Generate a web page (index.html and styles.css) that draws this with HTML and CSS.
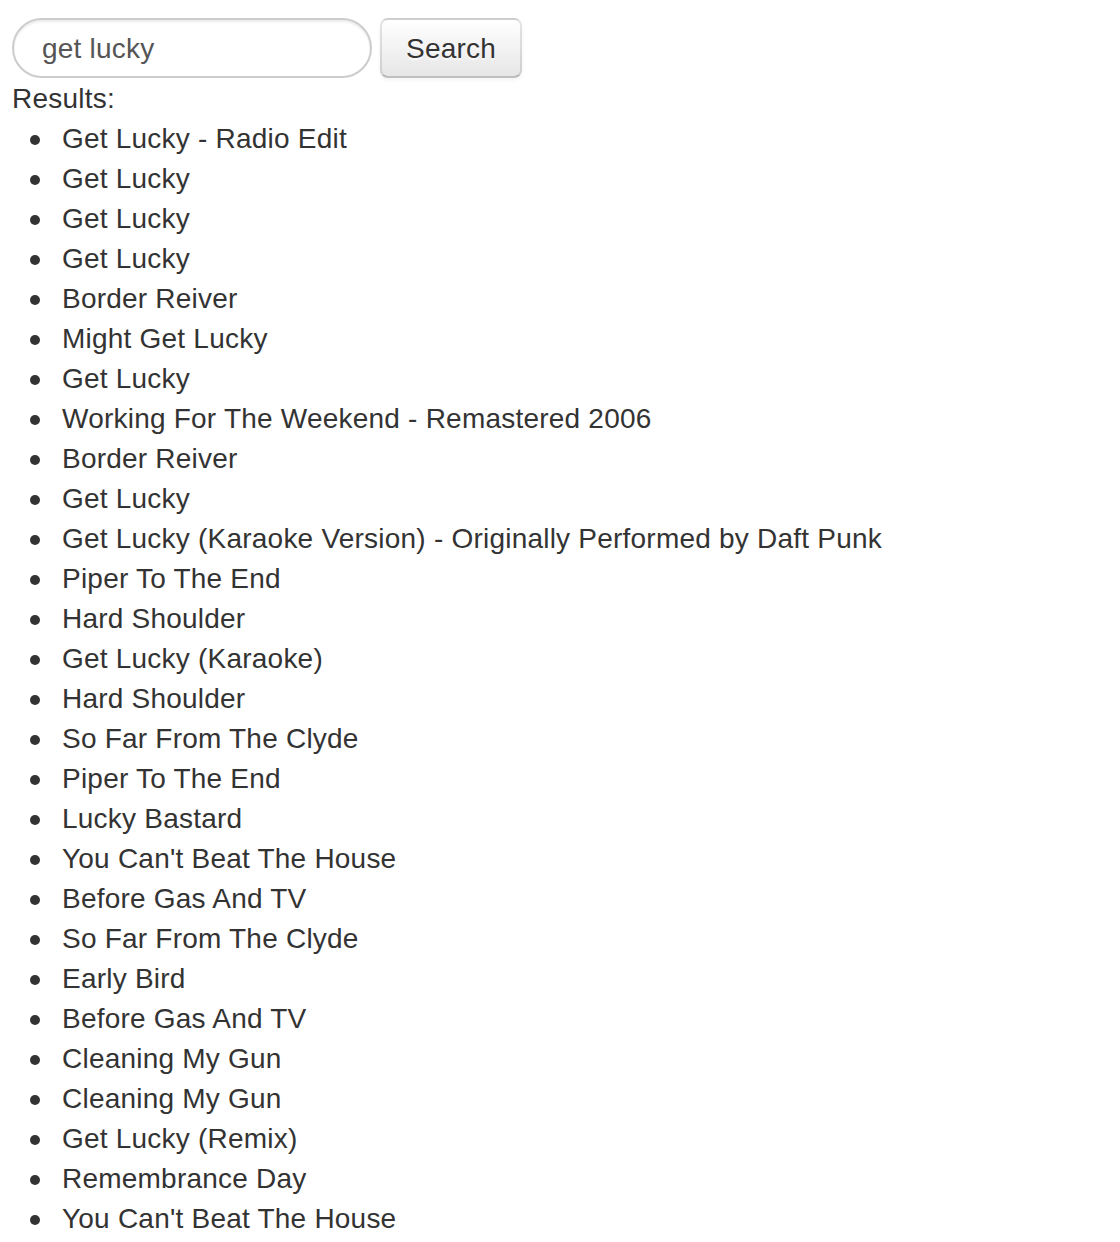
FILE: index.html
```html
<!DOCTYPE html>
<html>
<head>
<meta charset="utf-8">
<link rel="stylesheet" href="styles.css">
</head>
<body>
<form class="search-form">
  <input class="search-query" type="text" value="get lucky">
  <button class="btn" type="button">Search</button>
</form>
<div class="label">Results:</div>
<ul class="results">
  <li>Get Lucky - Radio Edit</li>
  <li>Get Lucky</li>
  <li>Get Lucky</li>
  <li>Get Lucky</li>
  <li>Border Reiver</li>
  <li>Might Get Lucky</li>
  <li>Get Lucky</li>
  <li>Working For The Weekend - Remastered 2006</li>
  <li>Border Reiver</li>
  <li>Get Lucky</li>
  <li>Get Lucky (Karaoke Version) - Originally Performed by Daft Punk</li>
  <li>Piper To The End</li>
  <li>Hard Shoulder</li>
  <li>Get Lucky (Karaoke)</li>
  <li>Hard Shoulder</li>
  <li>So Far From The Clyde</li>
  <li>Piper To The End</li>
  <li>Lucky Bastard</li>
  <li>You Can't Beat The House</li>
  <li>Before Gas And TV</li>
  <li>So Far From The Clyde</li>
  <li>Early Bird</li>
  <li>Before Gas And TV</li>
  <li>Cleaning My Gun</li>
  <li>Cleaning My Gun</li>
  <li>Get Lucky (Remix)</li>
  <li>Remembrance Day</li>
  <li>You Can't Beat The House</li>
</ul>
</body>
</html>
```
FILE: styles.css
```css
html, body {
  margin: 0;
  background: #fff;
}
body {
  padding: 18px 12px 0;
  font-family: "Liberation Sans", Arial, Helvetica, sans-serif;
  font-size: 28px;
  line-height: 40px;
  color: #333;
  letter-spacing: 0.22px;
}
.search-form {
  display: flex;
  align-items: flex-start;
  gap: 8px;
  margin: 0;
  height: 60px;
}
.search-query {
  box-sizing: border-box;
  width: 360px;
  height: 60px;
  margin: 0;
  padding: 9px 28px 7px;
  font-family: inherit;
  font-size: 28px;
  line-height: 40px;
  letter-spacing: 0.22px;
  color: #555;
  background: #fff;
  border: 2px solid #ccc;
  border-radius: 30px;
  box-shadow: inset 0 2px 2px rgba(0,0,0,0.075);
  outline: none;
}
.btn {
  box-sizing: border-box;
  height: 60px;
  margin: 0;
  padding: 9px 24px 7px;
  font-family: inherit;
  font-size: 28px;
  line-height: 40px;
  letter-spacing: 0.22px;
  color: #333;
  text-shadow: 0 2px 2px rgba(255,255,255,0.75);
  background: linear-gradient(to bottom, #ffffff, #e6e6e6);
  border: 2px solid rgba(0,0,0,0.1);
  border-bottom-color: rgba(0,0,0,0.25);
  border-radius: 8px;
  box-shadow: inset 0 2px 0 rgba(255,255,255,0.2), 0 2px 4px rgba(0,0,0,0.05);
}
.label {
  height: 40px;
  padding-top: 1px;
  box-sizing: border-box;
}
.results {
  margin: 0;
  padding: 0 0 0 50px;
  list-style: none;
}
.results li {
  line-height: 40px;
  padding-top: 1px;
  height: 40px;
  box-sizing: border-box;
}
.results li::before {
  content: "";
  display: inline-block;
  width: 10px;
  height: 10px;
  border-radius: 50%;
  background: #333;
  margin-left: -32px;
  margin-right: 22px;
  vertical-align: 3px;
}
```
